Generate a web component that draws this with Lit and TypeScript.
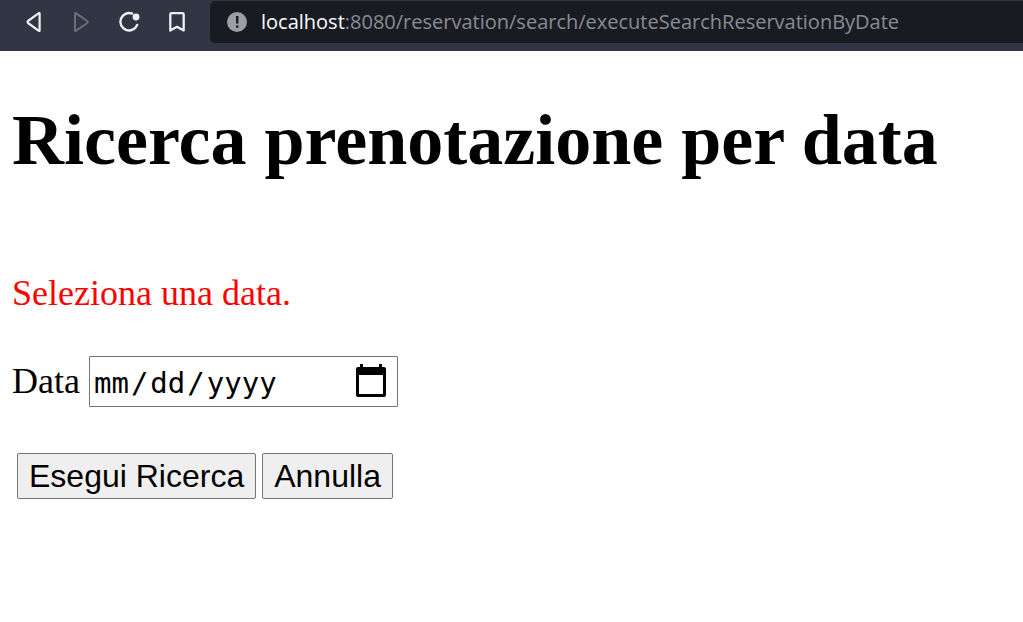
import { LitElement, html, css } from "lit";
import { customElement } from "lit/decorators.js";

@customElement("browser-bar")
export class BrowserBar extends LitElement {
  static styles = css`
    :host {
      display: block;
    }
    .bar {
      display: flex;
      align-items: flex-start;
      gap: 18px;
      box-sizing: border-box;
      padding: 1px 0 8px 20px;
      background: #323544;
    }
    .nav {
      display: flex;
      flex: none;
      gap: 20px;
      padding: 7px 0;
    }
    .tool {
      display: block;
      width: 28px;
      height: 28px;
      padding: 0;
      border: 0;
      background: none;
      color: #eeeff1;
    }
    .tool:disabled {
      color: #6b6d78;
    }
    svg {
      display: block;
    }
    .address {
      display: flex;
      flex: 1;
      align-items: center;
      gap: 14px;
      min-width: 0;
      height: 42px;
      padding-left: 17px;
      border-radius: 5px 0 0 5px;
      background: #181b22;
    }
    .info {
      flex: none;
    }
    .url {
      overflow: hidden;
      white-space: nowrap;
      font-family: "Open Sans", "Noto Sans", sans-serif;
      font-size: 20px;
      line-height: 42px;
      color: #8b8c8f;
    }
    .host {
      color: #fff;
    }
  `;

  render() {
    return html`
      <header class="bar">
        <nav class="nav">
          <button class="tool" aria-label="Indietro">
            <svg width="28" height="28" viewBox="0 0 28 28" fill="none" stroke="currentColor" stroke-width="2.2" stroke-linejoin="round">
              <path d="M19.6 5.6v16.8q0 .8-.8.4L8 15q-1-1 0-2L18.8 5.2q.8-.4.8.4Z" />
            </svg>
          </button>
          <button class="tool" aria-label="Avanti" disabled>
            <svg width="28" height="28" viewBox="0 0 28 28" fill="none" stroke="currentColor" stroke-width="2" stroke-linejoin="round">
              <path d="M7 5.6v16.8q0 .8.8.4L19.2 15q1-1 0-2L7.8 5.2Q7 4.8 7 5.6Z" />
            </svg>
          </button>
          <button class="tool" aria-label="Ricarica">
            <svg width="28" height="28" viewBox="0 0 28 28" fill="none" stroke="currentColor" stroke-width="2.4" stroke-linecap="round">
              <path d="M16.2 5.6A8.7 8.7 0 1 0 21.2 16.9" />
              <circle cx="20" cy="9" r="3.4" fill="currentColor" stroke="none" />
            </svg>
          </button>
          <button class="tool" aria-label="Segnalibro">
            <svg width="28" height="28" viewBox="0 0 28 28" fill="none" stroke="currentColor" stroke-width="2.3" stroke-linejoin="round">
              <path d="M7.6 5.2H18.400Q19.700 5.200 19.700 6.500V22.600L13 18.800L6.300 22.600V6.500Q6.300 5.200 7.600 5.200Z" />
            </svg>
          </button>
        </nav>
        <div class="address">
          <svg class="info" width="20" height="20" viewBox="0 0 20 20">
            <circle cx="10" cy="10" r="10" fill="#9b9ea7" />
            <path d="M9 4h2.400v7.500H9zM9 13.600h2.400v2.200H9z" fill="#181b22" />
          </svg>
          <div class="url"><span class="host">localhost</span>:8080/reservation/search/executeSearchReservationByDate</div>
        </div>
      </header>
    `;
  }
}

@customElement("app-root")
export class AppRoot extends LitElement {
  static styles = css`
    :host {
      display: block;
      min-height: 100vh;
      background: #fff;
      color: #000;
    }
    .page {
      padding: 47px 12px;
      font-family: "Liberation Serif", "Times New Roman", serif;
      font-size: 36px;
      line-height: 42px;
    }
    .title {
      margin: 0;
      font-size: 72px;
      line-height: 84px;
      font-weight: bold;
    }
    .error {
      margin: 90px 0 42px;
      color: #f00;
    }
    .field {
      display: flex;
      align-items: center;
      gap: 9px;
    }
    .label {
      padding-bottom: 2px;
    }
    .date {
      box-sizing: border-box;
      width: 309px;
      height: 51px;
      margin: 0;
      padding: 0 10px 0 3px;
      border: 1px solid #767676;
      border-radius: 1px;
      background: #fff;
      color: #000;
      font-family: "DejaVu Sans Mono", monospace;
      font-size: 29px;
    }
    .date::-webkit-datetime-edit {
      padding-top: 2px;
    }
    .date::-webkit-datetime-edit-text {
      padding: 0 1px;
    }
    .date::-webkit-calendar-picker-indicator {
      width: 32px;
      height: 34px;
      margin: 0;
      padding: 0 0 2px;
      background: url("data:image/svg+xml,%3Csvg xmlns='http://www.w3.org/2000/svg' viewBox='0 0 32 34'%3E%3Cpath fill-rule='evenodd' d='M5 0h3v3h16V0h3v3h2q2 0 2 2v26q0 2-2 2H3q-2 0-2-2V5q0-2 2-2h2zM4 11v19h24V11z'/%3E%3C/svg%3E") top / 32px 34px no-repeat;
    }
    .actions {
      display: flex;
      gap: 6px;
      padding: 46px 5px 0;
    }
    .button {
      box-sizing: border-box;
      height: 46px;
      margin: 0;
      padding: 0 11px;
      border: 1px solid #767676;
      border-radius: 2px;
      background: #efefef;
      color: #000;
      font-family: "Liberation Sans", Arial, sans-serif;
      font-size: 32px;
      line-height: 44px;
    }
  `;

  render() {
    return html`
      <browser-bar></browser-bar>
      <main class="page">
        <h1 class="title">Ricerca prenotazione per data</h1>
        <p class="error">Seleziona una data.</p>
        <form @submit=${(event: Event) => event.preventDefault()}>
          <div class="field">
            <label class="label" for="data">Data</label>
            <input class="date" id="data" name="data" type="date" />
          </div>
          <div class="actions">
            <button class="button" type="submit">Esegui Ricerca</button>
            <button class="button" type="button">Annulla</button>
          </div>
        </form>
      </main>
    `;
  }
}
